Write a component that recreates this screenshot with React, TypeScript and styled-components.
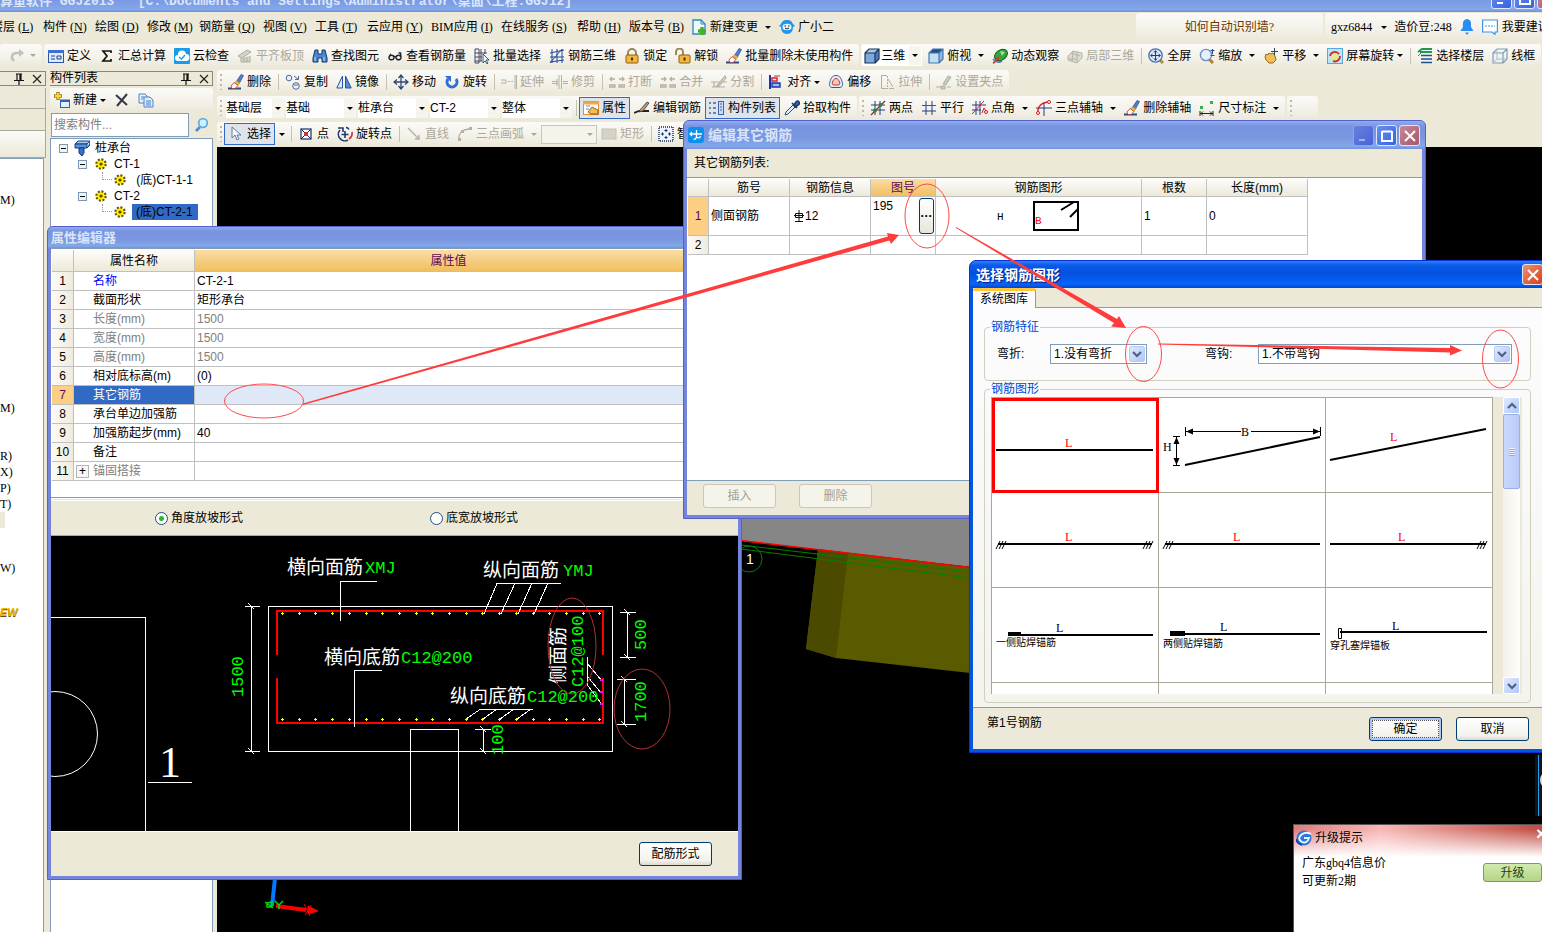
import React from "react";
import styled, { createGlobalStyle, css } from "styled-components";

const SANS = `"Liberation Sans", "Noto Sans CJK SC", sans-serif`;
const SERIF = `"Liberation Serif", "Noto Sans CJK SC", serif`;
const MONO = `"Liberation Mono", "Noto Sans CJK SC", monospace`;
const FACE = "#ece9d8";
const EDGE = "#7f9db9";

const GlobalStyle = createGlobalStyle`
  * { box-sizing: border-box; }
  body { margin: 0; background: ${FACE}; overflow: hidden; }
  button, input, select { font: inherit; color: inherit; margin: 0; }
  table { border-collapse: separate; border-spacing: 0; }
`;

/* ---------- icons ---------- */

const grid = (c: string) => <path d="M1 5h14M1 10h14M5 1v14M10 1v14" stroke={c} fill="none" />;
const eraser = (
  <>
    <path d="M0 14.500h8M8 14.500h5" stroke="#2b4a86" strokeWidth="2" />
    <path d="M8 8l5-7.500 2.500 1L11 10z" fill="#4c7fd0" stroke="#1c3c7c" strokeWidth=".6" />
    <path d="M8 6.500l4 2.500-2 3-4-3z" fill="#f0b23c" />
    <path d="M3 12l3-3.500 4 3L7 14.500H4z" fill="#fff" stroke="#a33" strokeWidth=".8" />
  </>
);
const cubeWire = (fill: string, c: string) => (
  <path d="M1 5h10v10H1zM1 5l4-4h10v10l-4 4M11 5l4-4" fill={fill} stroke={c} strokeWidth="1.2" />
);
const lens = (
  <>
    <path d="M10 11l4 4" stroke="#b98324" strokeWidth="3" />
    <circle cx="7" cy="7" r="5.6" fill="#e6f0fc" stroke="#6f8fc4" strokeWidth="1.4" />
  </>
);

const ICONS: Record<string, React.ReactNode> = {
  redo: (
    <>
      <path d="M5 13C1 9 3 5 8 5h3" fill="none" stroke="#c4c1b6" strokeWidth="2.500" />
      <path d="M10 1l5 4-5 4z" fill="#c4c1b6" />
    </>
  ),
  define: (
    <>
      <rect x=".5" y="2.500" width="15" height="12" fill="#dfeaff" stroke="#2c56a8" />
      <path d="M0 3.500h16" stroke="#3f6ed0" strokeWidth="3" />
      <path d="M3 8h4M3 11h4M9 8h4v3H9z" stroke="#1c3f8a" fill="none" />
    </>
  ),
  sigma: <path d="M12 5V3H4l4 5-4 5h8v-2" fill="none" stroke="#111" strokeWidth="1.700" />,
  cloud: (
    <>
      <rect width="16" height="16" rx="1" fill="#1a9be6" />
      <path d="M4 13a3 3 0 010-6 4 4 0 018-1 3.500 3.500 0 010 7z" fill="#fff" />
      <path d="M5 9l2.500 2L11 7" fill="none" stroke="#1a9be6" strokeWidth="1.300" />
    </>
  ),
  slab: <path d="M1 8l9-6 4 2-9 6zM4 10v4h9V8M7 10v4M10 9v5" fill="#d6d3c8" stroke="#aeab9f" />,
  binoc: (
    <>
      <path d="M3 2h3v4h4V2h3l2 8v4h-5v-4H6v4H1v-4z" fill="#4b86cf" stroke="#12386f" />
      <path d="M3 9v4M12 9v4" stroke="#bfe0ff" />
    </>
  ),
  glasses: (
    <path d="M2 9.500a2.500 2.300 0 105 0 2.500 2.300 0 10-5 0M9 9.500a2.500 2.300 0 105 0 2.500 2.300 0 10-5 0M7 9q1-1 2 0M14 9l-.5-4-2 0M2 9l2-3" fill="none" stroke="#223" strokeWidth="1.400" />
  ),
  batch: (
    <>
      <path d="M1 1h4v14H1zM1 5h12M1 9h7M7 1v12M11 1v5M1 13h7" fill="none" stroke="#446" />
      <path d="M9 6v9l2-2 2 3 1-1-2-3h3z" fill="#dff" stroke="#235" strokeWidth=".8" />
    </>
  ),
  rebar3d: <path d="M3 1v14M8 1v14M13 1v14M1 5l14-3M1 9h14M1 14l14-2M1 15L13 1" fill="none" stroke="#24479a" />,
  lock: (
    <>
      <path d="M4 8V5a4 4 0 018 0v3" fill="none" stroke="#9a8858" strokeWidth="2" />
      <rect x="2" y="7" width="12" height="8" rx="1" fill="#f3b93f" stroke="#8d5f10" />
      <path d="M8 9.500v3" stroke="#4a3000" strokeWidth="2" />
    </>
  ),
  unlock: (
    <>
      <path d="M1 7V4a3.500 3.500 0 017 0v3" fill="none" stroke="#9a8858" strokeWidth="2" />
      <rect x="4" y="7" width="11" height="8" rx="1" fill="#f3b93f" stroke="#8d5f10" />
      <path d="M9.500 9.500v3" stroke="#4a3000" strokeWidth="2" />
    </>
  ),
  eraser,
  cube: (
    <>
      <path d="M1 5l4-4h10v10l-4 4H1z" fill="#4f7cb4" />
      <path d="M1 5h10v10H1z" fill="#7fa9d8" />
      <path d="M1 5l4-4h10l-4 4z" fill="#a9c9ea" />
      {cubeWire("none", "#17375e")}
    </>
  ),
  cubeTop: (
    <>
      <path d="M1 5h10v10H1z" fill="#c4dcf4" />
      <path d="M11 5l4-4v10l-4 4z" fill="#8fb6e0" />
      <path d="M1 5l4-4h10l-4 4z" fill="#234f8c" />
      {cubeWire("none", "#4377b0")}
    </>
  ),
  orbit: (
    <>
      <ellipse cx="9" cy="7" rx="7" ry="5" transform="rotate(-35 9 7)" fill="#35a23c" stroke="#14601c" />
      <path d="M8 3l5 1-3 4z" fill="#a5e48c" />
      <path d="M1 15c3-1 2-4 6-5" stroke="#d33a2a" strokeWidth="2" fill="none" />
      <path d="M1 11q4 5 9 2" stroke="#4a76c8" strokeWidth="1.500" fill="none" />
    </>
  ),
  local3d: <path d="M1 8l5-5 9 2v5l-5 5-9-3zM4 5l9 3M6 3l-1 11M10 4v10M1 11l9 0" fill="#dedbd0" stroke="#b5b2a6" />,
  full: (
    <>
      <path d="M11 11l4 4" stroke="#c08a2a" strokeWidth="3" />
      <circle cx="7.500" cy="7.500" r="6.700" fill="#dbe8fa" stroke="#4b6fae" strokeWidth="1.300" />
      <path d="M7.500 3v9M3 7.500h9M6 4.500l1.500-2L9 4.500M6 10.500l1.500 2 1.500-2M4.500 6l-2 1.500 2 1.500M10.500 6l2 1.500-2 1.500" fill="none" stroke="#173d88" />
    </>
  ),
  zoom: (
    <>
      {lens}
      <path d="M13.500 1v5M11.500 2.500h4M11.500 7.500h4" stroke="#234a8c" fill="none" />
    </>
  ),
  hand: (
    <>
      <path d="M2 9l1-3 2 1 1-2 2 1 2-1 2 3 1 4-3 3H6L3 12z" fill="#efbf5a" stroke="#9a6a18" />
      <path d="M11.500 0v7M8 3.500h7" stroke="#345" fill="none" />
    </>
  ),
  screenRot: (
    <>
      <rect x=".5" y=".5" width="15" height="15" fill="#bfe6f7" stroke="#5aa6d8" />
      <path d="M4 9l3-3 3 1 1 3-4 3z" fill="#f2ea6a" />
      <path d="M3 8a5 5 0 019-2M13 8a5 5 0 01-7 5" fill="none" stroke="#d8261e" strokeWidth="1.800" />
    </>
  ),
  floors: (
    <>
      <path d="M1 4l4-3h10M3 4h12" stroke="#1f9a4a" strokeWidth="1.800" fill="none" />
      <path d="M4 7.500h11M4 11h11M4 14.500h11" stroke="#1f4f95" strokeWidth="1.600" />
      <path d="M1 8l3-3" stroke="#1f9a4a" />
    </>
  ),
  wire: (
    <>
      {cubeWire("none", "#7d9cc0")}
      <path d="M5 1v10h10M5 11l-4 4" fill="none" stroke="#a8bed6" />
    </>
  ),
  copy: (
    <>
      <circle cx="4" cy="4" r="2.800" fill="#eef" stroke="#4a6a9c" />
      <circle cx="11" cy="12" r="3.300" fill="#eef" stroke="#4a6a9c" />
      <path d="M8.500 10.500a3 1.500 0 005 0M9 2l4 3M13.500 2v3.500H10" fill="none" stroke="#4a6a9c" />
    </>
  ),
  mirror: (
    <>
      <path d="M6.500 2v12H.8z" fill="#dbe8fb" stroke="#2455a4" />
      <path d="M9.500 2v12h5.700z" fill="#5a8ad4" stroke="#2455a4" />
    </>
  ),
  move: (
    <path d="M8 1v14M1 8h14M5.500 4L8 1l2.500 3M5.500 12L8 15l2.500-3M4 5.500L1 8l3 2.500M12 5.500L15 8l-3 2.500" fill="none" stroke="#2d4a78" strokeWidth="1.300" />
  ),
  rotate: (
    <>
      <path d="M12 5a5 5 0 11-8 0" fill="none" stroke="#2f6fd4" strokeWidth="3" />
      <path d="M1 2h6v6z" fill="#2f6fd4" />
    </>
  ),
  extend: <path d="M0 6h5v3H0M7 7.500h2M10 7.500h2M14 1v14M15.500 1v14" fill="none" stroke="#b3b0a4" />,
  trim: <path d="M0 7.500h5v2H0M11 7.500h5M11 9.500h5M7 1v14M9.500 1v14M5 5v7" fill="none" stroke="#b3b0a4" />,
  break: <path d="M0 13h6v-2H0zM10 13h6v-2h-6zM1 5h5M3 3L1 5l2 2M10 5h5M13 3l2 2-2 2" fill="none" stroke="#b3b0a4" strokeWidth="1.300" />,
  merge: <path d="M0 13h6v-2H0zM10 13h6v-2h-6zM1 5h5M4 3l2 2-2 2M10 5h5M12 3l-2 2 2 2" fill="none" stroke="#b3b0a4" strokeWidth="1.300" />,
  split: <path d="M0 8h9M12 8h4M1 13h13M5 13L14 2l1 2-8 9M3 8v5" fill="none" stroke="#b3b0a4" strokeWidth="1.200" />,
  align: (
    <>
      <path d="M2 1v14" stroke="#1533a8" strokeWidth="2" />
      <path d="M4 4h5v3H4z" fill="none" stroke="#d8202a" strokeWidth="1.400" />
      <path d="M4 9h8v4H4z" fill="#9db8ee" stroke="#1533a8" strokeWidth="1.400" />
      <path d="M6 2h6" stroke="#d8202a" />
    </>
  ),
  offset: (
    <>
      <path d="M8 1.500c4 0 5 3 6 6s1 6-3 6H5c-4 0-4-3-3-6s2-6 6-6z" fill="#e3eefb" stroke="#31588c" />
      <path d="M8 4.500c2 0 3 2 3.500 3.500S12 11 10 11H6c-2 0-2-1.500-1.500-3S6 4.500 8 4.500z" fill="#f7c8bc" stroke="#c83a2a" />
    </>
  ),
  stretch: (
    <>
      <path d="M2 1.500h6M2.500 1v13.500H9" fill="none" stroke="#b3b0a4" />
      <path d="M8.500 2v12" stroke="#b3b0a4" strokeDasharray="2 1" />
      <path d="M9 5l5 8M10 14.500h5" fill="none" stroke="#b3b0a4" />
    </>
  ),
  grip: <path d="M0 13h5M11 13h4M7 10l5-8 3 1-5 8zM5 12h4v3H5z" fill="#cbc8bc" stroke="#b3b0a4" />,
  props: (
    <>
      <rect x=".5" y="1.500" width="15" height="13" fill="#fff" stroke="#e88c2a" />
      <path d="M0 3h16" stroke="#f0a54a" strokeWidth="3" />
      <path d="M3 6h4M3 9h3" stroke="#68a" />
      <path d="M5 12l4-5 6 3v4H8z" fill="#eebb55" stroke="#6f4a10" strokeWidth=".8" />
    </>
  ),
  editBar: (
    <>
      <path d="M0 13l5-2h10" fill="none" stroke="#222" strokeWidth="1.800" />
      <path d="M6 10l7-8 2 1-6 8-4 1z" fill="#b8a070" stroke="#333" strokeWidth=".8" />
    </>
  ),
  compList: (
    <>
      <path d="M0 3h2M0 8h2M0 13h2M4 3h3M4 8h3M4 13h3" stroke="#46689c" strokeWidth="1.500" />
      <rect x="9.500" y="1.500" width="5" height="13" fill="#c8dcf6" stroke="#3f66a6" />
      <path d="M11 4h2M11 7h2M11 10h2" stroke="#3f66a6" />
    </>
  ),
  pick: (
    <>
      <path d="M1 15l1-3 7-7 2 2-7 7z" fill="#dff0ff" stroke="#2d4f86" />
      <path d="M8 3l5 5M10 5l2-3q2-2 3 0t-1 3l-3 2z" fill="#2f6fc0" stroke="#173a70" strokeWidth="1.600" />
    </>
  ),
  twoPt: (
    <>
      {grid("#223a8c")}
      <path d="M1 15L15 1" stroke="#8a2b2b" strokeWidth="1.200" />
      <circle cx="5" cy="10.500" r="2" fill="#2b8a2b" />
      <circle cx="10.500" cy="5" r="2" fill="#2b8a2b" />
    </>
  ),
  parallel: (
    <>
      <path d="M5 1v14M11 1v14M1 11h14" stroke="#223a8c" />
      <path d="M1 5.500h14" stroke="#d02020" />
    </>
  ),
  ptAngle: (
    <>
      <path d="M4 1v14M8 1v14M0 5h14M0 10h9" stroke="#223a8c" fill="none" />
      <path d="M0 14L12 1M10 13l2-5 2 3" stroke="#d02020" fill="none" />
      <circle cx="14" cy="12" r="1.500" fill="none" stroke="#d02020" />
    </>
  ),
  threePt: (
    <>
      <path d="M0 8h16M8 3v13" stroke="#223a8c" />
      <path d="M2 14C1 6 6 2 14 2" fill="none" stroke="#d02020" strokeWidth="1.300" />
      <circle cx="2" cy="13" r="1.500" fill="#fff" stroke="#d02020" />
      <circle cx="13" cy="2" r="1.500" fill="#fff" stroke="#d02020" />
    </>
  ),
  dims: (
    <>
      <path d="M1 11v5M14 11v5M1 13.500h13M4 11.500l-2 2 2 2M11 11.500l2 2-2 2" fill="none" stroke="#222" />
      <path d="M1 6h3v3H1zM11 1h3v3h-3z" fill="#36b24a" />
    </>
  ),
  cursor: <path d="M4 1v11l3-3 2 5 2-1-2-4h4z" fill="#f4f8ff" stroke="#5f7ba6" />,
  point: (
    <>
      <rect x="3" y="3" width="10" height="10" fill="#fff" stroke="#1a2a6c" strokeWidth="1.200" />
      <path d="M3 3l10 10M13 3L3 13" stroke="#1a2a6c" />
      <circle cx="8" cy="8" r="2" fill="#d22" />
    </>
  ),
  rotPoint: (
    <>
      <path d="M3 4a6.500 6.500 0 008 10M1 2h5v4M8 5v7M4.500 8.500h7M9 1.500q2 0 3 2" fill="none" stroke="#213a70" strokeWidth="1.600" />
      <path d="M12 13a7 7 0 003-7" fill="none" stroke="#c33" strokeWidth="1.600" />
    </>
  ),
  line: <path d="M2 2l11 11M13 9v4H9" fill="none" stroke="#b3b0a4" strokeWidth="1.400" />,
  arc: (
    <>
      <path d="M2 14C1 7 6 3 13 3" fill="none" stroke="#b3b0a4" strokeWidth="1.300" />
      <path d="M1 12h3v3H1zM4 4h3v3H4zM12 1h3v3h-3z" fill="#b3b0a4" />
    </>
  ),
  rect: <rect x="1" y="3" width="14" height="10" fill="#d5d2c7" stroke="#c3c0b4" />,
  smart: (
    <>
      <rect x="1" y="1" width="14" height="14" fill="#eef4ff" stroke="#16305f" strokeWidth="1.500" strokeDasharray="1 1" />
      <path d="M8 3v3M6.500 4.500h3M8 10v3M6.500 11.500h3M3 8h3M4.500 6.500v3M10 8h3M11.500 6.500v3" stroke="#16305f" />
    </>
  ),
  newDoc: (
    <>
      <path d="M2 1h8l4 4v10H2z" fill="#eef8ff" stroke="#2a86c8" strokeWidth="1.300" />
      <path d="M10 1v4h4" fill="none" stroke="#2a86c8" />
      <path d="M11 8v8M7 12h8" stroke="#45b020" strokeWidth="3.500" />
    </>
  ),
  mascot: (
    <>
      <path d="M8 1c4 0 5 2 6 4l2 2-2 1c0 4-2 7-6 7s-6-3-6-7L0 7l2-2c1-2 2-4 6-4z" fill="#1f97ea" />
      <ellipse cx="8" cy="8" rx="4.500" ry="3.200" fill="#e6f6ff" />
      <path d="M5.500 7h1.500M9 7h1.500M6 9q2 2 4 0" stroke="#123" fill="none" />
    </>
  ),
  bell: (
    <>
      <path d="M8 0c5 1 4 5 4 8l2.500 4h-13L4 8c0-3-1-7 4-8z" fill="#2b8df2" />
      <path d="M6 13.500h4L8 16z" fill="#2b8df2" />
    </>
  ),
  chat: (
    <>
      <path d="M.6 1h14.800v12H13v2.500L10 13H.6z" fill="#fff" stroke="#3d94ea" strokeWidth="1.200" />
      <path d="M3 7h10" stroke="#3d94ea" strokeDasharray="2 1" />
    </>
  ),
  newComp: (
    <>
      <rect x="6.500" y="8" width="9" height="7.500" fill="#e2eefc" stroke="#2e63b4" />
      <path d="M6 9h10" stroke="#2e63b4" strokeWidth="2" />
      <path d="M4 0v8M0 4h8" stroke="#a08410" strokeWidth="3.400" />
      <path d="M4 1v6M1 4h6" stroke="#f5dc38" strokeWidth="1.800" />
    </>
  ),
  del: <path d="M2 3l11 10M13 2L3 14" stroke="#333a48" strokeWidth="2" />,
  dup: (
    <>
      <path d="M1 2h6l2 2v7H1z" fill="#e8f2ff" stroke="#4d80c8" />
      <path d="M6 5h6l3 3v7H6z" fill="#dcebff" stroke="#4d80c8" />
      <path d="M8 9h5M8 11h5M8 13h5M3 5h3M3 7h2" stroke="#4d80c8" />
    </>
  ),
  search: (
    <>
      <path d="M6 10l-4 4" stroke="#4a90c8" strokeWidth="2.600" />
      <circle cx="9" cy="6" r="4.300" fill="#d6f0ff" stroke="#5ab0e6" strokeWidth="1.800" />
    </>
  ),
  pile: (
    <>
      <path d="M1 4l3-3h12l-3 3z" fill="#a8c8f0" stroke="#123c86" />
      <path d="M1 4h12v4H1zM13 8l3-3V1" fill="#5a92dc" stroke="#123c86" />
      <path d="M5 8h5v5l-2 3-3-3z" fill="#3a70c4" stroke="#123c86" />
    </>
  ),
  gear: (
    <>
      <circle cx="8" cy="8" r="4.500" fill="#ffee00" stroke="#665500" strokeWidth="2.400" strokeDasharray="2 1.500" />
      <circle cx="8" cy="8" r="3.500" fill="#ffee00" />
      <circle cx="8" cy="8" r="1.600" fill="#554400" />
    </>
  ),
  pin: <path d="M5 3h6M6 3v6M10 3v6M9 3v6M3 9.500h10M8 10v4" fill="none" stroke="#111" strokeWidth="1.200" />,
  close: <path d="M4 4l8 8M12 4l-8 8" stroke="#222" strokeWidth="1.200" />,
  crane: (
    <>
      <rect width="16" height="16" rx="3" fill="#0d8ff0" />
      <path d="M3 7h11M8.500 3v7q-1 3-3 2M4 5L2 7l2 2M8.500 10q3 2 4-1" fill="none" stroke="#fff" strokeWidth="1.300" />
    </>
  ),
  glodon: (
    <>
      <circle cx="8" cy="8" r="7.500" fill="#2a78d8" />
      <path d="M15 4Q9 1 5 5t1 7q5 2 7-4H8" fill="none" stroke="#eef6ff" strokeWidth="1.800" />
      <path d="M0 9a8 8 0 006 6" stroke="#1c3fa8" fill="none" strokeWidth="2" />
    </>
  ),
  grade: <path d="M6 1v12M2.500 4.500h7v4h-7zM1 6.500h10M2 12.500h8" fill="none" stroke="#111" />,
};

const IconSvg = styled.svg`
  flex: none;
  width: 16px;
  height: 16px;
`;
const Icon = ({ name }: { name: string }) => (
  <IconSvg viewBox="0 0 16 16" aria-hidden="true">
    {ICONS[name]}
  </IconSvg>
);

const Arrow = styled.span<{ $off?: boolean; $gap?: number }>`
  width: 0;
  height: 0;
  margin-left: ${(p) => p.$gap ?? 2}px;
  border: 3px solid transparent;
  border-top-color: ${(p) => (p.$off ? "#aca899" : "#000")};
  border-bottom: 0;
`;

/* ---------- main window frame ---------- */

const Desktop = styled.div`
  position: relative;
  display: flex;
  flex-direction: column;
  height: 100vh;
  overflow: hidden;
  background: ${FACE};
  color: #000;
  font: 12px/16px ${SANS};
  white-space: nowrap;
`;

const AppTitle = styled.header`
  flex: none;
  display: flex;
  align-items: flex-end;
  justify-content: space-between;
  height: 12px;
  overflow: hidden;
  background: linear-gradient(#7b99e3, #82a8ea 80%, #7388d8);
  color: #dbe6fa;
  font: bold 13px/20px ${MONO};
  white-space: pre;
`;
const AppTitleText = styled.span`
  height: 20px;
`;
const AppCaption = styled.div`
  display: flex;
  gap: 2px;
  height: 24px;
  margin-right: -16px;
`;

const MenuBar = styled.nav`
  flex: none;
  display: flex;
  align-items: center;
  height: 30px;
  font-family: ${SERIF};
`;
const MenuItem = styled.button<{ $w: number }>`
  flex: none;
  width: ${(p) => p.$w}px;
  padding: 0;
  border: 0;
  background: none;
  text-align: left;
`;
const MenuList = styled.div`
  display: flex;
  align-items: center;
  margin-left: -9px;
`;
const MenuRight = styled.div`
  display: flex;
  gap: 2px;
  height: 28px;
  margin-left: auto;
`;
const Strip = css`
  background: linear-gradient(#fbfaf7, #f3f1e8 60%, #ebe8d8);
  border-radius: 3px;
`;
const Promo = styled.a`
  ${Strip}
  width: 187px;
  line-height: 28px;
  color: #6b3500;
  text-align: center;
  text-decoration: none;
`;
const UserBox = styled.div`
  ${Strip}
  display: flex;
  align-items: center;
  gap: 7px;
  width: 217px;
  padding-left: 6px;
  overflow: hidden;
`;
const ChatLink = styled.a`
  display: flex;
  align-items: center;
  gap: 4px;
  color: inherit;
  text-decoration: none;
`;

const BarRow = styled.div<{ $h: number }>`
  flex: none;
  display: flex;
  align-items: center;
  gap: 2px;
  height: ${(p) => p.$h}px;
`;
const Bar = styled.div`
  ${Strip}
  display: flex;
  align-items: center;
  flex: none;
  height: 24px;
  padding-right: 2px;
`;
const Grip = styled.i`
  width: 2px;
  height: 16px;
  margin: 0 2px 0 3px;
  background: repeating-linear-gradient(#bdb9a9 0 2px, transparent 2px 5px);
`;
const Sep = styled.i`
  width: 1px;
  height: 16px;
  margin: 0 2px 0 3px;
  background: #c5c2b3;
`;
const ToolButton = styled.button<{ $on?: boolean }>`
  flex: none;
  display: flex;
  align-items: center;
  gap: 3px;
  height: 22px;
  padding: 0 3px;
  border: 1px solid ${(p) => (p.$on ? "#316ac5" : "transparent")};
  background: ${(p) => (p.$on ? "#dfe3ea" : "none")};
  &:disabled {
    color: #aca899;
  }
`;

type ToolProps = { icon: string; label?: string; on?: boolean; off?: boolean; drop?: boolean; split?: boolean };
const Tool = ({ icon, label, on, off, drop, split }: ToolProps) => (
  <ToolButton $on={on} disabled={off}>
    <Icon name={icon} />
    {label}
    {(drop || split) && <Arrow $off={off} $gap={split ? 4 : 0} />}
  </ToolButton>
);

const PickBox = styled.span<{ $w: number; $off?: boolean }>`
  flex: none;
  display: flex;
  align-items: center;
  width: ${(p) => p.$w}px;
  height: ${(p) => (p.$off ? 19 : 21)}px;
  padding-right: 3px;
  border: 1px solid ${(p) => (p.$off ? "#c9c7ba" : "transparent")};
  background: ${(p) => (p.$off ? "#f5f4ea" : "linear-gradient(to left, #f6f4ec 12px, #fff 12px)")};
  background-clip: padding-box;
`;
const PickSelect = styled.select`
  flex: 1;
  min-width: 0;
  padding: 0;
  border: 0;
  background: none;
  appearance: none;
`;
const Pick = ({ label, value, w, off }: { label: string; value: string; w: number; off?: boolean }) => (
  <PickBox $w={w} $off={off}>
    <PickSelect aria-label={label} disabled={off}>
      <option>{value}</option>
    </PickSelect>
    <Arrow $off={off} />
  </PickBox>
);

const Body = styled.main`
  flex: 1;
  display: flex;
  min-height: 0;
`;

/* ---------- docked panels ---------- */

const Dock = styled.aside<{ $w: number }>`
  flex: none;
  display: flex;
  flex-direction: column;
  width: ${(p) => p.$w}px;
  padding-top: 2px;
  margin-right: 4px;
`;
const DockHead = styled.h2`
  display: flex;
  align-items: center;
  flex: none;
  height: 15px;
  margin: 0 0 2px;
  border: 1px solid #8a887c;
  border-left: 0;
  font: 12px/13px ${SANS};
`;
const Spacer = styled.span`
  flex: 1;
`;
const PlainButton = styled.button`
  display: flex;
  padding: 0;
  border: 0;
  background: none;
`;
const DockIcons = styled.span`
  display: flex;
  gap: 2px;
`;
const Pane = styled.div<{ $h: number; $light?: boolean }>`
  flex: none;
  height: ${(p) => p.$h}px;
  border: solid #aca899;
  border-width: 0 1px 1px 0;
  background: ${(p) => (p.$light ? "linear-gradient(#fbfaf7, #ece9d8)" : "none")};
`;
const ShortcutList = styled.ul`
  flex: 1;
  min-height: 0;
  margin: 0 2px 0 0;
  padding: 33px 0 0;
  list-style: none;
  border: solid ${EDGE};
  border-width: 1px 1px 0 0;
  background: #fff;
  font-family: ${SERIF};
`;
const ShortcutRow = styled.li<{ $mark?: boolean }>`
  width: ${(p) => (p.$mark ? "5px" : "auto")};
  height: 16px;
  background: ${(p) => (p.$mark ? FACE : "none")};
`;
const NewTag = styled.em`
  display: block;
  color: #f0b400;
  font: italic bold 11px/8px ${SANS};
  text-shadow: 0 1px 0 #6b4a00;
`;
const CompTools = styled.div`
  ${Strip}
  flex: none;
  display: flex;
  align-items: center;
  height: 24px;
`;
const SearchRow = styled.div`
  flex: none;
  display: flex;
  align-items: center;
  gap: 5px;
  height: 26px;
  padding-left: 1px;
`;
const SearchInput = styled.input`
  width: 138px;
  height: 24px;
  padding: 0 2px;
  border: 1px solid ${EDGE};
  background: #fff;
  &::placeholder {
    color: #808080;
  }
`;
const Tree = styled.ul`
  flex: 1;
  min-height: 0;
  margin: 0;
  padding: 1px 0 0;
  list-style: none;
  border: 1px solid ${EDGE};
  border-bottom: 0;
  background: #fff;
`;
const TreeRow = styled.li<{ $depth: number }>`
  display: flex;
  align-items: center;
  height: 16px;
  padding-left: ${(p) => 8 + p.$depth * 19}px;
`;
const Toggle = styled.button`
  flex: none;
  width: 9px;
  height: 9px;
  margin-right: 6px;
  padding: 0;
  border: 1px solid #7898b5;
  background: linear-gradient(#000, #000) center / 5px 1px no-repeat #f4f3ee;
`;
const Branch = styled.i`
  flex: none;
  align-self: flex-start;
  width: 10px;
  height: 8px;
  margin: 0 0 0 5px;
  border: dotted #999;
  border-width: 0 0 1px 1px;
`;
const TreeLabel = styled.span<{ $sel?: boolean }>`
  margin-left: ${(p) => (p.$sel ? 4 : 3)}px;
  padding: 0 5px 0 ${(p) => (p.$sel ? 4 : 2)}px;
  background: ${(p) => (p.$sel ? "#316ac5" : "none")};
`;

const Work = styled.div`
  flex: 1;
  display: flex;
  flex-direction: column;
  min-width: 0;
`;
const Viewport = styled.div`
  flex: 1;
  min-height: 0;
  overflow: hidden;
  background: #000;
`;
const Scene = styled.svg`
  display: block;
  width: 100%;
  height: 100%;
`;

/* ---------- floating windows ---------- */

const Win = styled.section<{ $x: number; $y: number; $w: number; $h: number; $active?: boolean }>`
  position: absolute;
  left: ${(p) => p.$x}px;
  top: ${(p) => p.$y}px;
  display: flex;
  flex-direction: column;
  width: ${(p) => p.$w}px;
  height: ${(p) => p.$h}px;
  padding: 0 3px 3px;
  border: 1px solid ${(p) => (p.$active ? "#0831d9" : "#5560c8")};
  border-radius: ${(p) => (p.$active ? "7px 7px 0 0" : "6px 6px 0 0")};
  background: ${(p) => (p.$active ? "#0855dd" : "#7585dc")};
  overflow: hidden;
`;
const WinTitle = styled.header<{ $h: number; $active?: boolean }>`
  flex: none;
  display: flex;
  align-items: center;
  gap: 4px;
  height: ${(p) => p.$h}px;
  margin: 0 -3px;
  padding: 0 2px 0 ${(p) => (p.$active ? 6 : 3)}px;
  color: ${(p) => (p.$active ? "#fff" : "#d8e4f8")};
  background: ${(p) =>
    p.$active
      ? "linear-gradient(#2f84f8, #0a5cea 15%, #0350dc 45%, #0664fc 85%, #0346c8)"
      : "linear-gradient(#8fadf0, #7893df 20%, #7b97e0 60%, #82a8ea 90%, #7590dc)"};
`;
const WinName = styled.h1<{ $active?: boolean; $small?: boolean }>`
  flex: 1;
  margin: 0;
  font: bold ${(p) => (p.$small ? 13 : 14)}px/20px ${SANS};
  text-shadow: ${(p) => (p.$active ? "1px 1px 1px #0a1883" : "none")};
`;
const CaptionButton = styled.button<{ $kind: "blue" | "faded" | "rose" | "red" }>`
  flex: none;
  display: flex;
  width: 21px;
  height: 21px;
  padding: 2px;
  border: 1px solid ${(p) => (p.$kind === "faded" ? "#8ea3e6" : "#dfe7fb")};
  border-radius: 3px;
  color: ${(p) => (p.$kind === "faded" ? "#9fb2ee" : "#fff")};
  background: ${(p) =>
    ({
      blue: "linear-gradient(135deg, #6b8ff0, #3563e0)",
      faded: "linear-gradient(135deg, #6a7fe0, #4763d8)",
      rose: "linear-gradient(135deg, #c58a9a, #a8556a)",
      red: "linear-gradient(135deg, #f09070, #d8401c)",
    })[p.$kind]};
`;
const CaptionGlyph = ({ d }: { d: string }) => (
  <IconSvg viewBox="0 0 16 16" aria-hidden="true">
    <path d={d} fill="none" stroke="currentColor" strokeWidth="2" />
  </IconSvg>
);
const MIN = "M3 12h6";
const MAX = "M3 3.500h10M3 3v10h10V3";
const CLOSE = "M3 3l10 10M13 3L3 13";
const CaptionSet = styled.div`
  display: flex;
  gap: 2px;
  padding-right: 3px;
`;

const PushButton = styled.button<{ $primary?: boolean }>`
  flex: none;
  width: 73px;
  height: 24px;
  padding: 0;
  border: 1px solid #003c74;
  border-radius: 3px;
  background: linear-gradient(#fff, #f3f2ec 80%, #dcd8cc);
  box-shadow: ${(p) => (p.$primary ? "inset 0 0 0 2px #a9c4f5" : "none")};
  outline: ${(p) => (p.$primary ? "1px dotted #555" : "none")};
  outline-offset: -4px;
  &:disabled {
    border-color: #c9c7ba;
    background: #f5f4ea;
    color: #a1a192;
  }
`;

const Client = styled.div`
  flex: 1;
  display: flex;
  flex-direction: column;
  min-height: 0;
  background: ${FACE};
`;

const Sheet = styled.table`
  table-layout: fixed;
  th,
  td {
    padding: 0;
    border: solid #c0c0c0;
    border-width: 0 1px 1px 0;
    font-weight: normal;
    overflow: hidden;
  }
`;
const SheetWrap = styled.div`
  flex: 1;
  min-height: 0;
  padding: 1px 0 0 1px;
  border: solid ${EDGE};
  border-width: 1px 0;
  background: #fff;
  overflow: hidden;
`;
const HeadCell = styled.th<{ $h: number; $on?: boolean }>`
  height: ${(p) => p.$h}px;
  color: ${(p) => (p.$on ? "#5b0a5b" : "#000")};
  background: ${(p) => (p.$on ? "linear-gradient(#fbdda5, #f0bf60)" : "linear-gradient(#fdfcfa, #ece9d8)")};
`;
const NumCell = styled.th<{ $h: number; $on?: boolean }>`
  height: ${(p) => p.$h}px;
  color: ${(p) => (p.$on ? "#5b0a5b" : "#000")};
  background: ${(p) => (p.$on ? "#fdcf84" : "linear-gradient(to right, #fbfaf6, #efecde)")};
`;
const NameCell = styled.td<{ $tone?: string }>`
  color: ${(p) => (p.$tone === "sel" ? "#fff" : p.$tone === "key" ? "#00f" : p.$tone === "off" ? "#808080" : "#000")};
  background: ${(p) => (p.$tone === "sel" ? "#316ac5" : "#fff")};
`;
const NameInner = styled.div`
  display: flex;
  align-items: center;
`;
const ExpandSlot = styled.span`
  flex: none;
  display: flex;
  justify-content: center;
  width: 17px;
  margin-right: 2px;
`;
const ExpandButton = styled.button`
  width: 13px;
  height: 13px;
  padding: 0;
  border: 1px solid #b4b4b4;
  background: #f6f6f6;
  color: #000;
  font-size: 12px;
  line-height: 11px;
`;
const ValueCell = styled.td<{ $tone?: string }>`
  color: ${(p) => (p.$tone === "off" ? "#808080" : "#000")};
  background: ${(p) => (p.$tone === "sel" ? "#dfe8f6" : "#fff")};
`;
const CellText = styled.span`
  padding-left: 2px;
`;

const RadioRow = styled.div`
  flex: none;
  display: flex;
  height: 38px;
  padding-left: 104px;
  border-top: 3px double #fff;
  border-bottom: 1px solid #aca899;
`;
const RadioLabel = styled.label`
  display: flex;
  align-items: center;
  gap: 3px;
  width: 275px;
`;
const Radio = styled.input`
  appearance: none;
  width: 13px;
  height: 13px;
  border: 1px solid #1d5281;
  border-radius: 50%;
  background: #fff;
  &:checked {
    background: radial-gradient(circle, #2db52d 0 2px, #fff 3px);
  }
`;
const Drawing = styled.svg`
  flex: none;
  display: block;
  width: 100%;
  height: 295px;
  background: #000;
`;
const PropFooter = styled.div`
  flex: none;
  display: flex;
  align-items: center;
  justify-content: flex-end;
  height: 45px;
  padding-right: 26px;
  border-top: 1px solid #fff;
`;

const PROPS: [string, string, string?][] = [
  ["名称", "CT-2-1", "key"],
  ["截面形状", "矩形承台"],
  ["长度(mm)", "1500", "off"],
  ["宽度(mm)", "1500", "off"],
  ["高度(mm)", "1500", "off"],
  ["相对底标高(m)", "(0)"],
  ["其它钢筋", "", "sel"],
  ["承台单边加强筋", ""],
  ["加强筋起步(mm)", "40"],
  ["备注", ""],
  ["锚固搭接", "", "off"],
];

const topDots = Array.from({ length: 20 }, (_, i) => 282 + Math.round(i * 16.7));

const SectionDrawing = () => (
  <Drawing>
    <g transform="translate(-51 -536)" fill="none" stroke="#fff" shapeRendering="crispEdges">
      <path d="M51 617.500h94.500V831M148 782.500h44" />
      <circle cx="55" cy="734" r="42.500" shapeRendering="auto" />
      <path d="M268.500 606.500h344v145h-344zM410.500 831V729.500h48V831" />
      <path d="M276.500 655v-44H603v44M276.500 678v45H603v-45" stroke="#f00" strokeWidth="2" />
      <path d="M251.500 606v146M245 606.500h15M245 751.500h15M627.500 612v46M620 612.500h16M620 657.500h16M624.500 679v46M617 679.500h19M617 724.500h19M483.500 729v22M475 729.500h16M477 751.500h12" />
      <path d="M248 603l6 6M248 748l6 6M624 609l6 6M624 654l6 6M621 676l6 6M621 721l6 6M480 726l6 6M480 748l6 6" />
      <path d="M340.500 621v-39.500H377M354.500 727v-56.500H382" />
      <path d="M561 583.500h-64L484 614M515 583l-14 31M532 583l-14 31M548 583l-14 31M533 709.500h-53L466 719M497 709l-14 10M514 709l-14 10M531 709l-14 10" />
      <path d="M587.500 657v28l14 19M587 663l15 18M588 677l13 16" />
      <path d={topDots.map((x) => `M${x - 1} 613.500h3M${x - 1} 719.500h3`).join("")} stroke="#ff0" />
      <path d={topDots.map((x) => `M${x + 0.5} 612v3M${x + 0.5} 718v3`).join("")} stroke="#ff0" />
      <path d="M600 680h3M600 692h3M600 704h3" stroke="#f0f" strokeWidth="2" />
    </g>
    <g transform="translate(-51 -536)" fill="#fff" fontFamily={MONO} fontSize="19">
      <text x="287" y="574">横向面筋</text>
      <text x="483" y="577">纵向面筋</text>
      <text x="324" y="664">横向底筋</text>
      <text x="450" y="703">纵向底筋</text>
      <text transform="translate(565 684) rotate(-90)">侧面筋</text>
      <text x="159" y="777" fontFamily={SERIF} fontSize="44">1</text>
    </g>
    <g transform="translate(-51 -536)" fill="#0f0" fontFamily={MONO} fontSize="17">
      <text x="365" y="573">XMJ</text>
      <text x="563" y="576">YMJ</text>
      <text x="401" y="663">C12@200</text>
      <text x="527" y="702">C12@200</text>
      <text transform="translate(583 687) rotate(-90)">C12@100</text>
      <text transform="translate(243 697) rotate(-90)">1500</text>
      <text transform="translate(646 650) rotate(-90)">500</text>
      <text transform="translate(646 722) rotate(-90)">1700</text>
      <text transform="translate(503 755) rotate(-90)">100</text>
    </g>
    <g transform="translate(-51 -536)" fill="none" stroke="#b23030">
      <ellipse cx="572" cy="646" rx="24" ry="48" />
      <ellipse cx="642" cy="709" rx="28" ry="40" />
    </g>
  </Drawing>
);

const PropertyWindow = () => (
  <Win $x={47} $y={226} $w={695} $h={654}>
    <WinTitle $h={21}>
      <WinName $small>属性编辑器</WinName>
    </WinTitle>
    <Client>
      <SheetWrap>
        <Sheet>
          <colgroup>
            <col style={{ width: 22 }} />
            <col style={{ width: 121 }} />
            <col style={{ width: 508 }} />
          </colgroup>
          <thead>
            <tr>
              <HeadCell $h={22} />
              <HeadCell $h={22}>属性名称</HeadCell>
              <HeadCell $h={22} $on>
                属性值
              </HeadCell>
            </tr>
          </thead>
          <tbody>
            {PROPS.map(([name, value, tone], i) => (
              <tr key={name}>
                <NumCell $h={19} $on={tone === "sel"}>
                  {i + 1}
                </NumCell>
                <NameCell $tone={tone}>
                  <NameInner>
                    <ExpandSlot>{i === 10 && <ExpandButton aria-label="展开">+</ExpandButton>}</ExpandSlot>
                    {name}
                  </NameInner>
                </NameCell>
                <ValueCell $tone={tone}>
                  <CellText>{value}</CellText>
                </ValueCell>
              </tr>
            ))}
          </tbody>
        </Sheet>
      </SheetWrap>
      <RadioRow>
        <RadioLabel>
          <Radio type="radio" name="slope" defaultChecked />
          角度放坡形式
        </RadioLabel>
        <RadioLabel>
          <Radio type="radio" name="slope" />
          底宽放坡形式
        </RadioLabel>
      </RadioRow>
      <SectionDrawing />
      <PropFooter>
        <PushButton>配筋形式</PushButton>
      </PropFooter>
    </Client>
  </Win>
);

/* ---------- rebar list window ---------- */

const ListLabel = styled.p`
  flex: none;
  margin: 0;
  padding: 6px 7px;
  height: 28px;
`;
const ListFooter = styled.div`
  flex: none;
  display: flex;
  gap: 23px;
  height: 34px;
  padding: 3px 16px;
`;
const FigureCell = styled.div`
  display: flex;
  justify-content: space-between;
  height: 38px;
  padding: 1px 1px 0 2px;
`;
const DotsButton = styled.button`
  width: 15px;
  height: 36px;
  padding: 0;
  border: 1px solid #003c74;
  border-radius: 3px;
  background: linear-gradient(#fff, #e8e5da);
  font-weight: bold;
`;
const GradeCell = styled.span`
  display: flex;
  align-items: center;
  padding-left: 3px;
`;
const GradeMark = styled.svg`
  flex: none;
  width: 12px;
  height: 14px;
`;
const ShapeSvg = styled.svg`
  display: block;
  width: 100%;
  height: 38px;
`;
const LIST_COLS = [21, 81, 81, 65, 206, 65, 101];

const ListWindow = () => (
  <Win $x={683} $y={120} $w={743} $h={399}>
    <WinTitle $h={28}>
      <TitleIcon>
        <Icon name="crane" />
      </TitleIcon>
      <WinName>编辑其它钢筋</WinName>
      <CaptionSet>
        <CaptionButton $kind="faded" aria-label="最小化" disabled>
          <CaptionGlyph d={MIN} />
        </CaptionButton>
        <CaptionButton $kind="blue" aria-label="最大化">
          <CaptionGlyph d={MAX} />
        </CaptionButton>
        <CaptionButton $kind="rose" aria-label="关闭">
          <CaptionGlyph d={CLOSE} />
        </CaptionButton>
      </CaptionSet>
    </WinTitle>
    <Client>
      <ListLabel>其它钢筋列表:</ListLabel>
      <SheetWrap>
        <Sheet>
          <colgroup>
            {LIST_COLS.map((w, i) => (
              <col key={i} style={{ width: w }} />
            ))}
          </colgroup>
          <thead>
            <tr>
              {["", "筋号", "钢筋信息", "图号", "钢筋图形", "根数", "长度(mm)"].map((h) => (
                <HeadCell key={h} $h={18} $on={h === "图号"}>
                  {h}
                </HeadCell>
              ))}
            </tr>
          </thead>
          <tbody>
            <tr>
              <NumCell $h={39} $on>
                1
              </NumCell>
              <td>
                <CellText>侧面钢筋</CellText>
              </td>
              <td>
                <GradeCell>
                  <GradeMark viewBox="0 0 12 14" aria-hidden="true">
                    {ICONS.grade}
                  </GradeMark>
                  12
                </GradeCell>
              </td>
              <td>
                <FigureCell>
                  195
                  <DotsButton aria-label="选择图号">···</DotsButton>
                </FigureCell>
              </td>
              <td>
                <ShapeSvg>
                  <text x="61" y="23" fontFamily={MONO} fontSize="11">H</text>
                  <text x="99" y="27" fontFamily={MONO} fontSize="11" fill="#f00">B</text>
                  <path d="M98 5h44v28H98zM125 13l13-8M134 20l8-8" fill="none" stroke="#000" strokeWidth="2" />
                </ShapeSvg>
              </td>
              <td>
                <CellText>1</CellText>
              </td>
              <td>
                <CellText>0</CellText>
              </td>
            </tr>
            <tr>
              <NumCell $h={19}>2</NumCell>
              <td />
              <td />
              <td />
              <td />
              <td />
              <td />
            </tr>
          </tbody>
        </Sheet>
      </SheetWrap>
      <ListFooter>
        <PushButton disabled>插入</PushButton>
        <PushButton disabled>删除</PushButton>
      </ListFooter>
    </Client>
  </Win>
);

const TitleIcon = styled.span`
  display: flex;
  margin-left: 1px;
`;

/* ---------- shape picker ---------- */

const TabStrip = styled.div`
  flex: none;
  display: flex;
  align-items: flex-end;
  height: 20px;
  border-bottom: 1px solid #919b9c;
`;
const Tab = styled.button`
  width: 63px;
  height: 20px;
  margin-bottom: -1px;
  padding: 0;
  border: 1px solid #919b9c;
  border-top: 3px solid #ffc73c;
  border-bottom: 0;
  border-left: 0;
  border-radius: 3px 3px 0 0;
  background: #fcfcfe;
  line-height: 15px;
`;
const TabPane = styled.div`
  flex: 1;
  display: flex;
  flex-direction: column;
  min-height: 0;
  padding: 11px 14px 4px 11px;
  border-bottom: 1px solid #919b9c;
  background: linear-gradient(#fcfcfe, #f4f3ee);
`;
const Group = styled.fieldset`
  min-width: 0;
  margin: 0;
  padding: 0 5px;
  border: 1px solid #d0d0bf;
  border-radius: 4px;
  legend {
    padding: 0 1px;
    margin: 0;
    color: #0046d5;
  }
`;
const FormRow = styled.div`
  display: flex;
  align-items: center;
  height: 45px;
  padding: 0 12px 7px 7px;
`;
const FieldLabel = styled.label`
  display: flex;
  align-items: center;
`;
const FieldText = styled.span`
  width: 53px;
`;
const XpSelectBox = styled.span<{ $w: number }>`
  display: flex;
  width: ${(p) => p.$w}px;
  height: 20px;
  border: 1px solid ${EDGE};
  background: #fff;
`;
const XpSelect = styled.select`
  flex: 1;
  min-width: 0;
  padding: 0 3px;
  border: 0;
  background: none;
  appearance: none;
`;
const XpBlock = styled.span`
  display: flex;
  align-items: center;
  justify-content: center;
  width: 16px;
  height: 16px;
  margin: 1px;
  border: 1px solid #b8cbf5;
  border-radius: 2px;
  background: linear-gradient(135deg, #e0e9ff, #b0c6f6);
`;
const Chevron = ({ up }: { up?: boolean }) => (
  <svg width="10" height="8" viewBox="0 0 10 8" aria-hidden="true">
    <path d={up ? "M1 6l4-4 4 4" : "M1 2l4 4 4-4"} fill="none" stroke="#4d6185" strokeWidth="2.200" />
  </svg>
);
const XpPick = ({ label, value, w }: { label: string; value: string; w: number }) => (
  <FieldLabel>
    <FieldText>{label}</FieldText>
    <XpSelectBox $w={w}>
      <XpSelect>
        <option>{value}</option>
      </XpSelect>
      <XpBlock>
        <Chevron />
      </XpBlock>
    </XpSelectBox>
  </FieldLabel>
);
const FormGap = styled.span`
  width: 58px;
`;
const Catalog = styled.div`
  display: flex;
  height: 297px;
  margin: 0 3px 8px 1px;
  overflow: hidden;
  background: ${FACE};
`;
const CatalogGrid = styled.div`
  display: grid;
  grid-template-columns: repeat(3, 167px);
  grid-auto-rows: 95px;
  width: 502px;
  border: solid #aca899;
  border-width: 1px 0 0 1px;
`;
const CatalogCell = styled.button<{ $sel?: boolean }>`
  display: block;
  padding: 0;
  border: solid #aca899;
  border-width: 0 1px 1px 0;
  background: #fff;
  outline: ${(p) => (p.$sel ? "3px solid #f00" : "none")};
  outline-offset: -3px;
`;
const CellSvg = styled.svg`
  display: block;
  width: 166px;
  height: 94px;
`;
const ScrollTrack = styled.div`
  display: flex;
  flex-direction: column;
  width: 17px;
  margin-left: 10px;
  background: linear-gradient(to right, #f3f1ec, #fefefb);
`;
const ScrollButton = styled.button`
  display: flex;
  align-items: center;
  justify-content: center;
  height: 17px;
  padding: 0;
  border: 1px solid #fff;
  border-radius: 2px;
  background: linear-gradient(135deg, #e0e9ff, #b0c6f6);
`;
const Thumb = styled.div`
  height: 75px;
  border: 1px solid #98b0e8;
  border-radius: 2px;
  background: repeating-linear-gradient(#eef4ff 0 1px, #8caaec 1px 2px) center / 6px 8px no-repeat,
    linear-gradient(to right, #c9d8fc, #b9cbf8);
`;
const PickFooter = styled.div`
  flex: none;
  display: flex;
  align-items: center;
  gap: 14px;
  height: 41px;
  padding: 0 16px 0 14px;
`;
const FootNote = styled.span`
  flex: 1;
  padding-bottom: 12px;
`;

const bar = (d: string) => <path d={d} fill="none" stroke="#000" strokeWidth="2" />;
const hatch = (x: number) => (
  <path d={`M${x} 56l4-8M${x + 3} 56l4-8M${x + 6} 56l4-8`} stroke="#000" fill="none" />
);
const mark = (x: number, y: number, c = "#f00", t = "L") => (
  <text x={x} y={y} fill={c} fontFamily={SERIF} fontSize="12">
    {t}
  </text>
);
const note = (y: number, t: string) => (
  <text x="4" y={y} fontFamily={SANS} fontSize="10">
    {t}
  </text>
);
const SHAPES: React.ReactNode[] = [
  <>{bar("M4 52h157")}{mark(73, 49)}</>,
  <>
    {bar("M26 67L161 39")}
    <path d="M26.500 29v9M161.500 29v9M27 33.500h55M92 33.500h69M14 38.500h7M14 67.500h7M17.500 39v28" stroke="#000" fill="none" />
    <path d="M27 33.500l7-3v6zM161 33.500l-7-3v6zM17.500 39l-3 7h6zM17.500 67l-3-7h6z" />
    {mark(82, 38, "#000", "B")}
    {mark(4, 53, "#000", "H")}
  </>,
  <>{bar("M4 62L160 31")}{mark(64, 43)}</>,
  <>{bar("M6 51h154")}{hatch(4)}{hatch(151)}{mark(73, 48)}</>,
  <>{bar("M6 51h155")}{hatch(4)}{mark(74, 48)}</>,
  <>{bar("M4 51h156")}{hatch(151)}{mark(72, 48)}</>,
  <>{bar("M16 47h145")}<path d="M16 44h13v4H16z" />{mark(64, 44, "#000")}{note(58, "一侧贴焊锚筋")}</>,
  <>{bar("M11 46h150")}<path d="M11 43h15v5H11z" />{mark(61, 43, "#000")}{note(59, "两侧贴焊锚筋")}</>,
  <>{bar("M14 44h147")}<path d="M12.500 40.500h3v10h-3z" fill="none" stroke="#000" />{mark(66, 42, "#000")}{note(61, "穿孔塞焊锚板")}</>,
  null,
  null,
  null,
];

const PickerWindow = () => (
  <Win $x={969} $y={260} $w={580} $h={493} $active>
    <WinTitle $h={27} $active>
      <WinName $active>选择钢筋图形</WinName>
      <CaptionSet>
        <CaptionButton $kind="red" aria-label="关闭">
          <CaptionGlyph d={CLOSE} />
        </CaptionButton>
      </CaptionSet>
    </WinTitle>
    <Client>
      <TabStrip>
        <Tab>系统图库</Tab>
      </TabStrip>
      <TabPane>
        <Group>
          <legend>钢筋特征</legend>
          <FormRow>
            <XpPick label="弯折:" value="1.没有弯折" w={97} />
            <FormGap />
            <XpPick label="弯钩:" value="1.不带弯钩" w={254} />
          </FormRow>
        </Group>
        <Group>
          <legend>钢筋图形</legend>
          <Catalog>
            <CatalogGrid>
              {SHAPES.map((s, i) => (
                <CatalogCell key={i} $sel={i === 0} aria-label={`图形 ${i + 1}`}>
                  <CellSvg>{s}</CellSvg>
                </CatalogCell>
              ))}
            </CatalogGrid>
            <ScrollTrack>
              <ScrollButton aria-label="向上">
                <Chevron up />
              </ScrollButton>
              <Thumb />
              <Spacer />
              <ScrollButton aria-label="向下">
                <Chevron />
              </ScrollButton>
            </ScrollTrack>
          </Catalog>
        </Group>
      </TabPane>
      <PickFooter>
        <FootNote>第1号钢筋</FootNote>
        <PushButton $primary>确定</PushButton>
        <PushButton>取消</PushButton>
      </PickFooter>
    </Client>
  </Win>
);

/* ---------- upgrade notice ---------- */

const Notice = styled.aside`
  position: absolute;
  right: 0;
  bottom: 0;
  width: 249px;
  height: 108px;
  border: solid #555;
  border-width: 1px 0 0 1px;
  background: linear-gradient(rgba(255, 255, 255, 0) 4px, #fff 32px), linear-gradient(to right, #e07c7a, #f7b8b6 35%, #c04a40);
`;
const NoticeHead = styled.header`
  display: flex;
  align-items: center;
  gap: 3px;
  height: 26px;
  padding-left: 2px;
`;
const NoticeClose = styled.button`
  width: 6px;
  height: 16px;
  margin: 0 0 8px auto;
  padding: 0;
  border: 0;
  overflow: hidden;
  background: none;
  color: #fff;
  font: bold 18px/14px ${SANS};
`;
const NoticeBody = styled.div`
  display: flex;
  align-items: center;
  justify-content: space-between;
  padding: 3px 0 0 8px;
  line-height: 18px;
`;
const NoticeText = styled.p`
  margin: 0;
  font-family: ${SERIF};
`;
const UpgradeButton = styled.button`
  width: 59px;
  height: 19px;
  padding: 0;
  border: 1px solid #7d9c5c;
  border-radius: 3px;
  background: linear-gradient(#d2eab0, #b4d488);
  color: #24420a;
`;

/* ---------- red pen marks over the windows ---------- */

const Marks = styled.svg`
  position: absolute;
  inset: 0;
  width: 100%;
  height: 100%;
  pointer-events: none;
`;

const SHORTCUTS: Record<number, string> = { 0: "M)", 13: "M)", 16: "R)", 17: "X)", 18: "P)", 19: "T)", 20: "#", 23: "W)", 26: "EW" };

const MENUS: [string, string, number][] = [
  ["楼层", "L", 52],
  ["构件", "N", 52],
  ["绘图", "D", 52],
  ["修改", "M", 52],
  ["钢筋量", "Q", 64],
  ["视图", "V", 52],
  ["工具", "T", 52],
  ["云应用", "Y", 64],
  ["BIM应用", "I", 70],
  ["在线服务", "S", 76],
  ["帮助", "H", 52],
  ["版本号", "B", 58],
];

export default function App() {
  return (
    <Desktop>
      <GlobalStyle />
      <AppTitle>
        <AppTitleText>{"算量软件 GGJ2013   [C:\\Documents and Settings\\Administrator\\桌面\\工程.GGJ12]"}</AppTitleText>
        <AppCaption>
          <CaptionButton $kind="blue" aria-label="最小化">
            <CaptionGlyph d={MIN} />
          </CaptionButton>
          <CaptionButton $kind="blue" aria-label="还原">
            <CaptionGlyph d={MAX} />
          </CaptionButton>
          <CaptionButton $kind="rose" aria-label="关闭">
            <CaptionGlyph d={CLOSE} />
          </CaptionButton>
        </AppCaption>
      </AppTitle>

      <MenuBar>
        <MenuList>
          {MENUS.map(([name, key, w]) => (
            <MenuItem key={name} $w={w}>
              {name} (<u>{key}</u>)
            </MenuItem>
          ))}
          <Tool icon="newDoc" label="新建变更" split />
          <Tool icon="mascot" label="广小二" />
        </MenuList>
        <MenuRight>
          <Promo href="#help">如何自动识别墙?</Promo>
          <UserBox>
            gxz6844
            <Arrow />
            造价豆:248
            <Icon name="bell" />
            <ChatLink href="#suggest">
              <Icon name="chat" />
              我要建议
            </ChatLink>
          </UserBox>
        </MenuRight>
      </MenuBar>

      <BarRow $h={27}>
        <Bar>
          <ToolButton disabled>
            <RedoSlot>
              <Icon name="redo" />
            </RedoSlot>
            <Arrow $off />
          </ToolButton>
        </Bar>
        <Bar>
          <Tool icon="define" label="定义" />
          <Tool icon="sigma" label="汇总计算" />
          <Tool icon="cloud" label="云检查" />
          <Tool icon="slab" label="平齐板顶" off />
          <Tool icon="binoc" label="查找图元" />
          <Tool icon="glasses" label="查看钢筋量" />
          <Tool icon="batch" label="批量选择" />
          <Tool icon="rebar3d" label="钢筋三维" />
          <Tool icon="lock" label="锁定" />
          <Tool icon="unlock" label="解锁" />
          <Tool icon="eraser" label="批量删除未使用构件" />
        </Bar>
        <Bar>
          <ViewPick>
            <Icon name="cube" />
            <Pick label="视图" value="三维" w={42} />
          </ViewPick>
          <Tool icon="cubeTop" label="俯视" split />
          <Tool icon="orbit" label="动态观察" />
          <Tool icon="local3d" label="局部三维" off />
          <Sep />
          <Tool icon="full" label="全屏" />
          <Tool icon="zoom" label="缩放" split />
          <Tool icon="hand" label="平移" split />
          <Tool icon="screenRot" label="屏幕旋转" drop />
          <Sep />
          <Tool icon="floors" label="选择楼层" />
          <Tool icon="wire" label="线框" />
        </Bar>
      </BarRow>

      <Body>
        <Dock $w={46}>
          <DockHead>
            <Spacer />
            <DockIcons>
              <PlainButton aria-label="固定">
                <Icon name="pin" />
              </PlainButton>
              <PlainButton aria-label="关闭">
                <Icon name="close" />
              </PlainButton>
            </DockIcons>
          </DockHead>
          <Pane $h={21} />
          <Pane $h={22} />
          <Pane $h={27} $light />
          <ShortcutList>
            {Array.from({ length: 27 }, (_, i) => (
              <ShortcutRow key={i} $mark={SHORTCUTS[i] === "#"}>
                {SHORTCUTS[i] === "EW" ? <NewTag>EW</NewTag> : SHORTCUTS[i] !== "#" && SHORTCUTS[i]}
              </ShortcutRow>
            ))}
          </ShortcutList>
        </Dock>

        <Dock $w={163}>
          <DockHead>
            构件列表
            <Spacer />
            <DockIcons>
              <PlainButton aria-label="固定">
                <Icon name="pin" />
              </PlainButton>
              <PlainButton aria-label="关闭">
                <Icon name="close" />
              </PlainButton>
            </DockIcons>
          </DockHead>
          <CompTools>
            <Tool icon="newComp" label="新建" drop />
            <ToolButton aria-label="删除">
              <Icon name="del" />
            </ToolButton>
            <ToolButton aria-label="复制">
              <Icon name="dup" />
            </ToolButton>
          </CompTools>
          <SearchRow>
            <SearchInput aria-label="搜索构件" placeholder="搜索构件..." />
            <PlainButton aria-label="搜索">
              <Icon name="search" />
            </PlainButton>
          </SearchRow>
          <Tree>
            <TreeRow $depth={0}>
              <Toggle aria-label="折叠" />
              <Icon name="pile" />
              <TreeLabel>桩承台</TreeLabel>
            </TreeRow>
            <TreeRow $depth={1}>
              <Toggle aria-label="折叠" />
              <Icon name="gear" />
              <TreeLabel>CT-1</TreeLabel>
            </TreeRow>
            <TreeRow $depth={2}>
              <Branch />
              <Icon name="gear" />
              <TreeLabel>&nbsp;(底)CT-1-1</TreeLabel>
            </TreeRow>
            <TreeRow $depth={1}>
              <Toggle aria-label="折叠" />
              <Icon name="gear" />
              <TreeLabel>CT-2</TreeLabel>
            </TreeRow>
            <TreeRow $depth={2}>
              <Branch />
              <Icon name="gear" />
              <TreeLabel $sel>(底)CT-2-1</TreeLabel>
            </TreeRow>
          </Tree>
        </Dock>

        <Work>
          <BarRow $h={26}>
            <Bar>
              <Grip />
              <Tool icon="eraser" label="删除" />
              <Sep />
              <Tool icon="copy" label="复制" />
              <Tool icon="mirror" label="镜像" />
              <Sep />
              <Tool icon="move" label="移动" />
              <Tool icon="rotate" label="旋转" />
              <Sep />
              <Tool icon="extend" label="延伸" off />
              <Tool icon="trim" label="修剪" off />
              <Sep />
              <Tool icon="break" label="打断" off />
              <Tool icon="merge" label="合并" off />
              <Tool icon="split" label="分割" off />
              <Sep />
              <Tool icon="align" label="对齐" drop />
              <Tool icon="offset" label="偏移" />
              <Tool icon="stretch" label="拉伸" off />
              <Sep />
              <Tool icon="grip" label="设置夹点" off />
            </Bar>
          </BarRow>
          <BarRow $h={26}>
            <Bar>
              <Grip />
              <PickGroup>
                <Pick label="楼层" value="基础层" w={60} />
                <Pick label="类别" value="基础" w={72} />
                <Pick label="构件类型" value="桩承台" w={72} />
                <Pick label="构件" value="CT-2" w={72} />
                <Pick label="单元" value="整体" w={72} />
              </PickGroup>
              <Sep />
              <Tool icon="props" label="属性" on />
              <Tool icon="editBar" label="编辑钢筋" />
              <Tool icon="compList" label="构件列表" on />
              <Tool icon="pick" label="拾取构件" />
            </Bar>
            <Bar>
              <Grip />
              <Tool icon="twoPt" label="两点" />
              <Tool icon="parallel" label="平行" />
              <Tool icon="ptAngle" label="点角" split />
              <Tool icon="threePt" label="三点辅轴" split />
              <Tool icon="eraser" label="删除辅轴" />
              <Tool icon="dims" label="尺寸标注" split />
            </Bar>
            <EmptyBar>
              <Grip />
            </EmptyBar>
          </BarRow>
          <BarRow $h={26}>
            <Bar>
              <Grip />
              <Tool icon="cursor" label="选择" on />
              <DropOnly aria-label="选择方式">
                <Arrow />
              </DropOnly>
              <Sep />
              <Tool icon="point" label="点" />
              <Tool icon="rotPoint" label="旋转点" />
              <Sep />
              <Tool icon="line" label="直线" off />
              <Tool icon="arc" label="三点画弧" off split />
              <Pick label="半径" value="" w={56} off />
              <Tool icon="rect" label="矩形" off />
              <Sep />
              <Tool icon="smart" label="智能布置" split />
            </Bar>
          </BarRow>
          <Viewport>
            <Scene>
              <g transform="translate(-217 -147)">
                <path d="M741 518h240v50L741 541z" fill="#868686" />
                <path d="M818 549l152 18v106l-134-15-30-9z" fill="#5a5a00" />
                <path d="M818 549l30 4-12 105-30-9z" fill="#4a4a00" />
                <path d="M741 545l229 27M741 549l229 29" stroke="#008200" fill="none" />
                <path d="M741 540.500l229 27" stroke="#f00" strokeWidth="1.500" />
                <circle cx="749" cy="559" r="13" fill="none" stroke="#008200" />
                <text x="746" y="564" fill="#fff" fontFamily={SANS} fontSize="14">1</text>
                <path d="M275 878l-3 28" stroke="#0078ff" strokeWidth="4" />
                <path d="M276 906l30 4" stroke="#f00" strokeWidth="4" />
                <path d="M308 906l10 5-10 3zM304 904l6 12M311 905l-6 10" fill="#f00" stroke="#f00" />
                <path d="M265 902l8 6M267 903l5-1v5h-5zM275 901l4 4 4-4M279 905v4" fill="none" stroke="#0d0" strokeWidth="1.500" />
                <path d="M1535 755h7v61h-7z" fill="#101418" />
                <path d="M1538.500 755v61" stroke="#1a9cf0" />
                <circle cx="1549" cy="780" r="9" fill="#ddd" />
              </g>
            </Scene>
          </Viewport>
        </Work>
      </Body>

      <PropertyWindow />
      <ListWindow />
      <PickerWindow />
      <Notice>
        <NoticeHead>
          <Icon name="glodon" />
          升级提示
          <NoticeClose aria-label="关闭">×</NoticeClose>
        </NoticeHead>
        <NoticeBody>
          <NoticeText>
            广东gbq4信息价
            <br />
            可更新2期
          </NoticeText>
          <UpgradeButton>升级</UpgradeButton>
        </NoticeBody>
      </Notice>

      <Marks aria-hidden="true">
        <g fill="none" stroke="#ff4a4a">
          <ellipse cx="264" cy="401" rx="39.500" ry="17" />
          <ellipse cx="927" cy="216" rx="22" ry="32" />
          <ellipse cx="1143.500" cy="354" rx="18" ry="27.500" />
          <ellipse cx="1500.500" cy="359" rx="18" ry="29" />
        </g>
        <g fill="#ff3b3b">
          <path d="M303 403.500L888 236.500l-1-3.500 12 2-8 9-1.500-3.500L303 405z" />
          <path d="M956 227L1117 319l2-3 7 12-15-1.500 3-3.500L956 228z" />
          <path d="M1158 343.500L1450 348v-3l12 5.500-12 5v-3L1158 344.500z" />
        </g>
      </Marks>
    </Desktop>
  );
}

const RedoSlot = styled.span`
  display: flex;
  padding-left: 5px;
`;
const PickGroup = styled.span`
  display: flex;
  padding-left: 1px;
`;
const ViewPick = styled.span`
  display: flex;
  align-items: center;
  height: 21px;
  margin: 0 2px 0 1px;
  padding-left: 2px;
  background: #fff;
`;
const EmptyBar = styled(Bar)`
  width: 31px;
`;
const DropOnly = styled(PlainButton)`
  padding: 0 3px 0 2px;
`;
